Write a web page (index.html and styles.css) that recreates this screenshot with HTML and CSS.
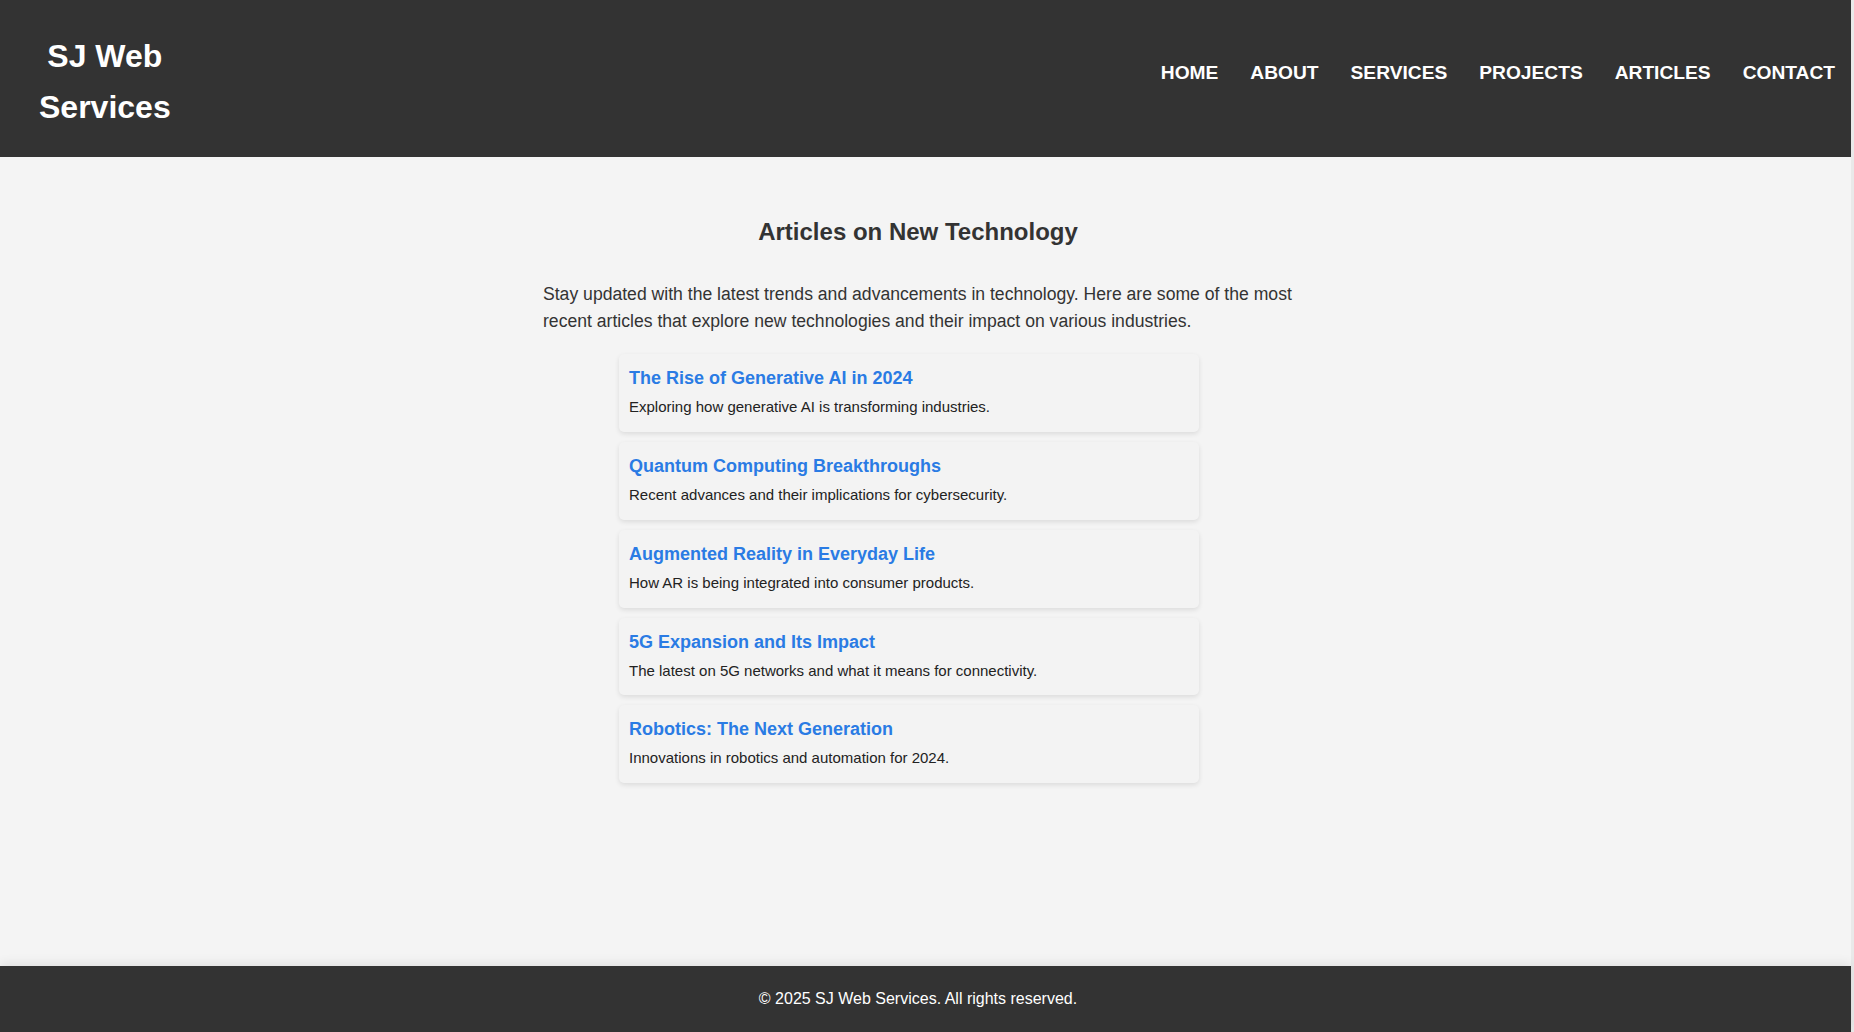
FILE: index.html
```html
<!DOCTYPE html>
<html lang="en">
<head>
<meta charset="utf-8">
<title>Articles - SJ Web Services</title>
<link rel="stylesheet" href="styles.css">
</head>
<body>
<div class="page">
  <header class="site-header">
    <h1 class="logo">SJ Web Services</h1>
    <nav class="main-nav">
      <ul class="nav-list">
        <li><a href="#">Home</a></li>
        <li><a href="#">About</a></li>
        <li><a href="#">Services</a></li>
        <li><a href="#">Projects</a></li>
        <li><a href="#">Articles</a></li>
        <li><a href="#">Contact</a></li>
      </ul>
    </nav>
  </header>

  <main class="content">
    <section class="articles">
      <h2 class="articles-title">Articles on New Technology</h2>
      <p class="intro">Stay updated with the latest trends and advancements in technology. Here are some of the most recent articles that explore new technologies and their impact on various industries.</p>
      <ul class="article-list">
        <li class="article-card">
          <h3 class="article-title"><a href="#">The Rise of Generative AI in 2024</a></h3>
          <p class="article-desc">Exploring how generative AI is transforming industries.</p>
        </li>
        <li class="article-card">
          <h3 class="article-title"><a href="#">Quantum Computing Breakthroughs</a></h3>
          <p class="article-desc">Recent advances and their implications for cybersecurity.</p>
        </li>
        <li class="article-card">
          <h3 class="article-title"><a href="#">Augmented Reality in Everyday Life</a></h3>
          <p class="article-desc">How AR is being integrated into consumer products.</p>
        </li>
        <li class="article-card">
          <h3 class="article-title"><a href="#">5G Expansion and Its Impact</a></h3>
          <p class="article-desc">The latest on 5G networks and what it means for connectivity.</p>
        </li>
        <li class="article-card">
          <h3 class="article-title"><a href="#">Robotics: The Next Generation</a></h3>
          <p class="article-desc">Innovations in robotics and automation for 2024.</p>
        </li>
      </ul>
    </section>
  </main>

  <footer class="site-footer">
    <p class="copyright">&copy; 2025 SJ Web Services. All rights reserved.</p>
  </footer>
</div>
</body>
</html>
```
FILE: styles.css
```css
html {
  background: #e9e9e9;
}

body {
  margin: 0;
  font-family: "Liberation Sans", Arial, sans-serif;
  line-height: 1.6;
  color: #333;
}

.page {
  width: calc(100% - 3px);
  min-height: 100vh;
  display: flex;
  flex-direction: column;
  background: #f4f4f4;
}

/* Header */
.site-header {
  background: #333;
  color: #fff;
  display: flex;
  justify-content: space-between;
  align-items: flex-start;
  padding: 31px 16px 24px 39px;
}

.logo {
  margin: 0;
  width: min-content;
  font-size: 32px;
  font-weight: bold;
  line-height: 1.6;
  text-align: center;
}

.nav-list {
  list-style: none;
  margin: 0;
  padding: 27px 0 0;
  display: flex;
  gap: 32px;
}

.nav-list a {
  color: #fff;
  text-decoration: none;
  font-weight: bold;
  font-size: 19.2px;
  text-transform: uppercase;
}

/* Main */
.content {
  flex: 1;
  padding: 56px 15px 0 0;
}

.articles {
  width: 750px;
  margin: 0 auto;
}

.articles-title {
  margin: 0 0 29px;
  font-size: 24px;
  line-height: 1.6;
  text-align: center;
  color: #333;
}

.intro {
  margin: 0 0 19.4px;
  font-size: 17.6px;
  line-height: 27px;
}

.article-list {
  list-style: none;
  margin: 0 0 0 76px;
  padding: 0;
  width: 580px;
  display: flex;
  flex-direction: column;
  gap: 10px;
}

.article-card {
  box-sizing: border-box;
  background: #f3f3f3;
  padding: 12px 10px;
  border-radius: 5px;
  box-shadow: 0 2px 5px rgba(0, 0, 0, 0.1);
}

.article-title {
  margin: 0 0 2.6px;
  font-size: 18px;
  line-height: 25.6px;
}

.article-title a {
  color: #2a7be4;
  text-decoration: none;
}

.article-desc {
  margin: 0;
  font-size: 15px;
  line-height: 25.6px;
  color: #222;
}

/* Footer */
.site-footer {
  background: #333;
  color: #fff;
  text-align: center;
  padding: 20px 15px 20px 0;
  box-shadow: 0 -3px 10px rgba(0, 0, 0, 0.08);
}

.copyright {
  margin: 0;
  font-size: 16px;
  line-height: 25.6px;
}
```
